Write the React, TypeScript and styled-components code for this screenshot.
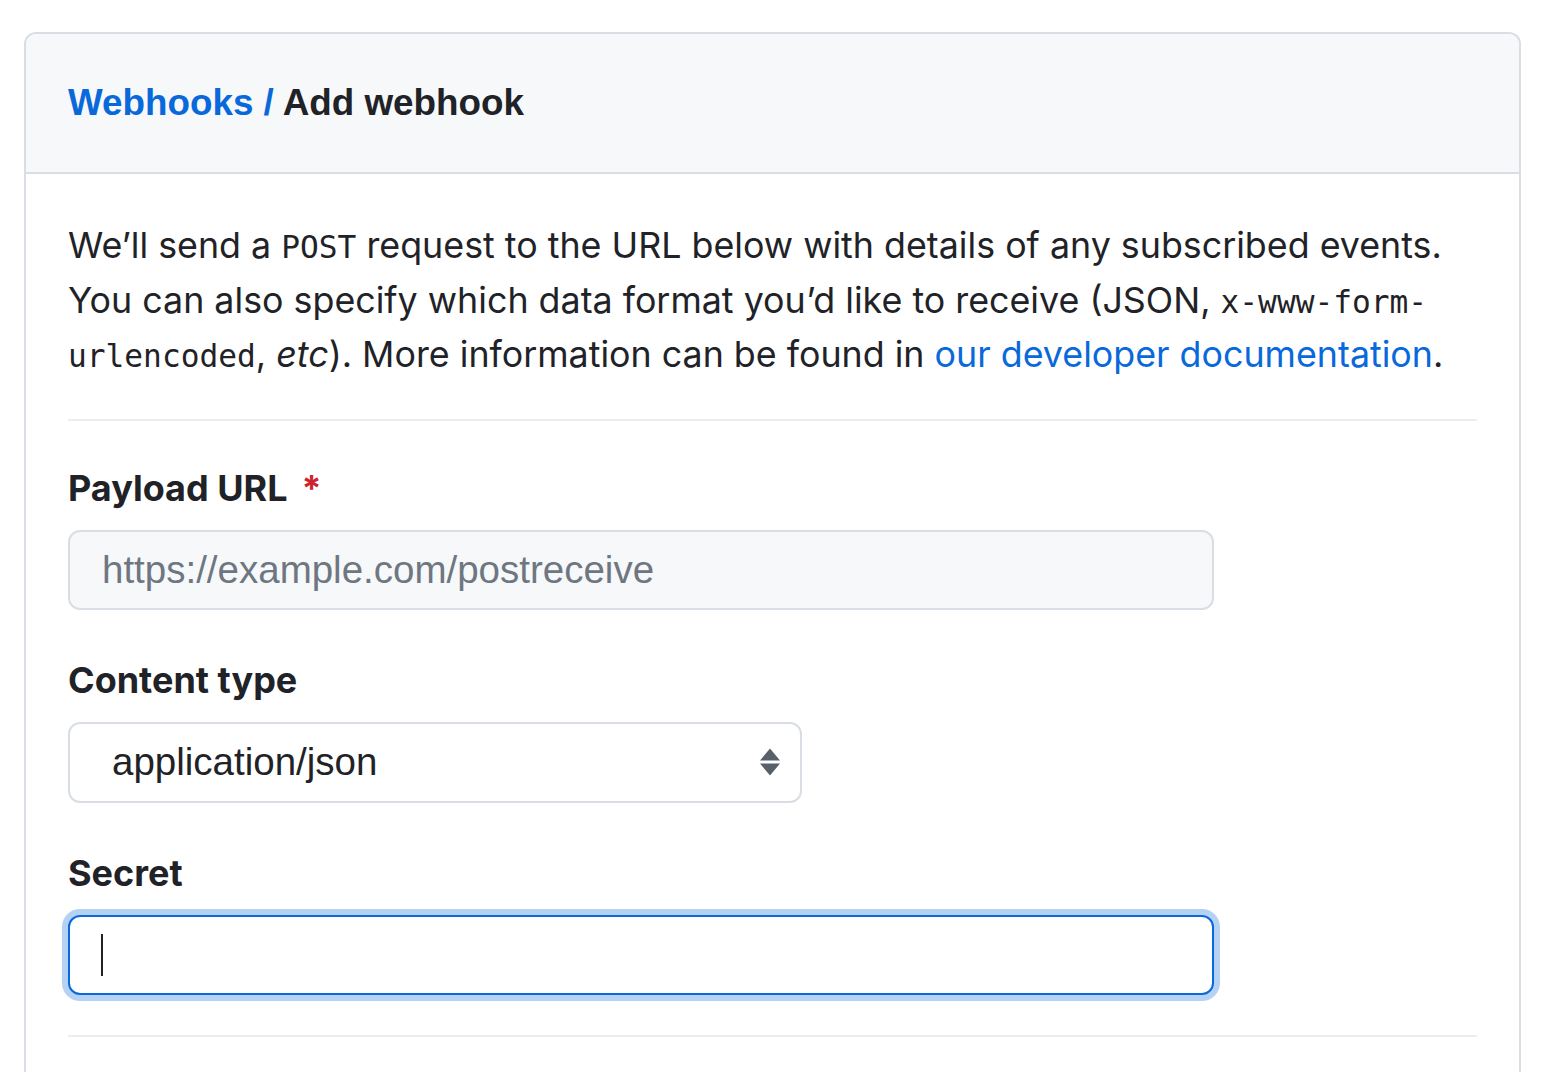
import React from "react";
import styled, { createGlobalStyle } from "styled-components";

const Global = createGlobalStyle`
  html, body { margin: 0; padding: 0; background: #ffffff; }
  body { font-family: Inter, "Liberation Sans", sans-serif; color: #1f2328; }
  * { box-sizing: border-box; }
`;

const Page = styled.div`
  padding: 32px 27px 0 24px;
  height: 1072px;
  overflow: hidden;
`;

const Card = styled.section`
  border: 2px solid #d8dee4;
  border-bottom: none;
  border-radius: 12px 12px 0 0;
  min-height: 1100px;
`;

const Header = styled.header`
  height: 140px;
  display: flex;
  align-items: center;
  padding: 0 42px;
  background: #f6f8fa;
  border-bottom: 2px solid #d8dee4;
  border-radius: 10px 10px 0 0;
`;

const Title = styled.h2`
  margin: 0;
  font-family: "Liberation Sans", Arial, sans-serif;
  font-weight: 700;
  font-size: 36.8px;
  color: #1f2328;
`;

const Crumb = styled.a`
  color: #0969da;
  text-decoration: none;
`;

const Body = styled.div`
  padding: 44px 42px 0 42px;
`;

const Intro = styled.p`
  margin: 0;
  font-size: 35.8px;
  line-height: 54.5px;
  color: #1f2328;
`;

const Code = styled.code`
  font-family: "DejaVu Sans Mono", "Liberation Mono", monospace;
  font-size: 31.2px;
  line-height: 0;
`;

const Link = styled.a`
  color: #0969da;
  text-decoration: none;
`;

const Divider = styled.hr<{ $top: number; $bottom: number }>`
  border: none;
  border-top: 2px solid #ebedf0;
  margin: ${(p) => `${p.$top}px 0 ${p.$bottom}px`};
`;

const Field = styled.div<{ $gap?: number }>`
  display: flex;
  flex-direction: column;
  margin-bottom: ${(p) => p.$gap ?? 0}px;
`;

const Label = styled.label`
  font-weight: 700;
  font-size: 36px;
  line-height: 40px;
  color: #1f2328;
  margin-bottom: 22px;
`;

const Required = styled.span`
  color: #cf222e;
  margin-left: 14px;
`;

const TextInput = styled.input<{ $focused?: boolean }>`
  width: 1146px;
  height: 80px;
  padding: 0 32px;
  font-family: "Liberation Sans", Arial, sans-serif;
  font-size: 38.5px;
  color: #1f2328;
  background: ${(p) => (p.$focused ? "#ffffff" : "#f6f8fa")};
  border: 2px solid ${(p) => (p.$focused ? "#0969da" : "#d8dee4")};
  border-radius: 12px;
  outline: none;
  box-shadow: ${(p) => (p.$focused ? "0 0 0 6px rgba(9,105,218,0.3)" : "none")};
  &::placeholder { color: #6e7781; }
`;

const SelectBox = styled.div`
  position: relative;
  width: 734px;
  height: 81px;
  display: flex;
  align-items: center;
  padding: 0 42px;
  background: #ffffff;
  border: 2px solid #d8dee4;
  border-radius: 12px;
  font-family: "Liberation Sans", Arial, sans-serif;
  font-size: 38.5px;
  color: #1f2328;
`;

const SelectArrows = styled.svg`
  position: absolute;
  right: 20px;
  top: 50%;
  transform: translateY(-50%);
`;

const Caret = styled.span`
  position: absolute;
  left: 33px;
  top: 19px;
  width: 2px;
  height: 42px;
  background: #1f2328;
`;

const InputWrap = styled.div`
  position: relative;
  width: 1146px;
`;

export default function App() {
  return (
    <Page>
      <Global />
      <Card>
        <Header>
          <Title>
            <Crumb href="#">Webhooks</Crumb>
            <Crumb href="#"> / </Crumb>
            Add webhook
          </Title>
        </Header>
        <Body>
          <Intro>
            We’ll send a <Code>POST</Code> request to the URL below with details of any subscribed events.
            You can also specify which data format you’d like to receive (JSON, <Code>x-www-form-urlencoded</Code>,{" "}
            <em>etc</em>). More information can be found in <Link href="#">our developer documentation</Link>.
          </Intro>
          <Divider $top={37} $bottom={47} />
          <Field $gap={50}>
            <Label>
              Payload URL<Required>*</Required>
            </Label>
            <TextInput placeholder="https://example.com/postreceive" />
          </Field>
          <Field $gap={50}>
            <Label>Content type</Label>
            <SelectBox>
              application/json
              <SelectArrows width="20" height="27" viewBox="0 0 20 27">
                <path d="M10 0 L20 12 H0 Z" fill="#57606a" />
                <path d="M10 27 L20 15 H0 Z" fill="#57606a" />
              </SelectArrows>
            </SelectBox>
          </Field>
          <Field>
            <Label>Secret</Label>
            <InputWrap>
              <TextInput $focused />
              <Caret />
            </InputWrap>
          </Field>
          <Divider $top={40} $bottom={0} />
        </Body>
      </Card>
    </Page>
  );
}
